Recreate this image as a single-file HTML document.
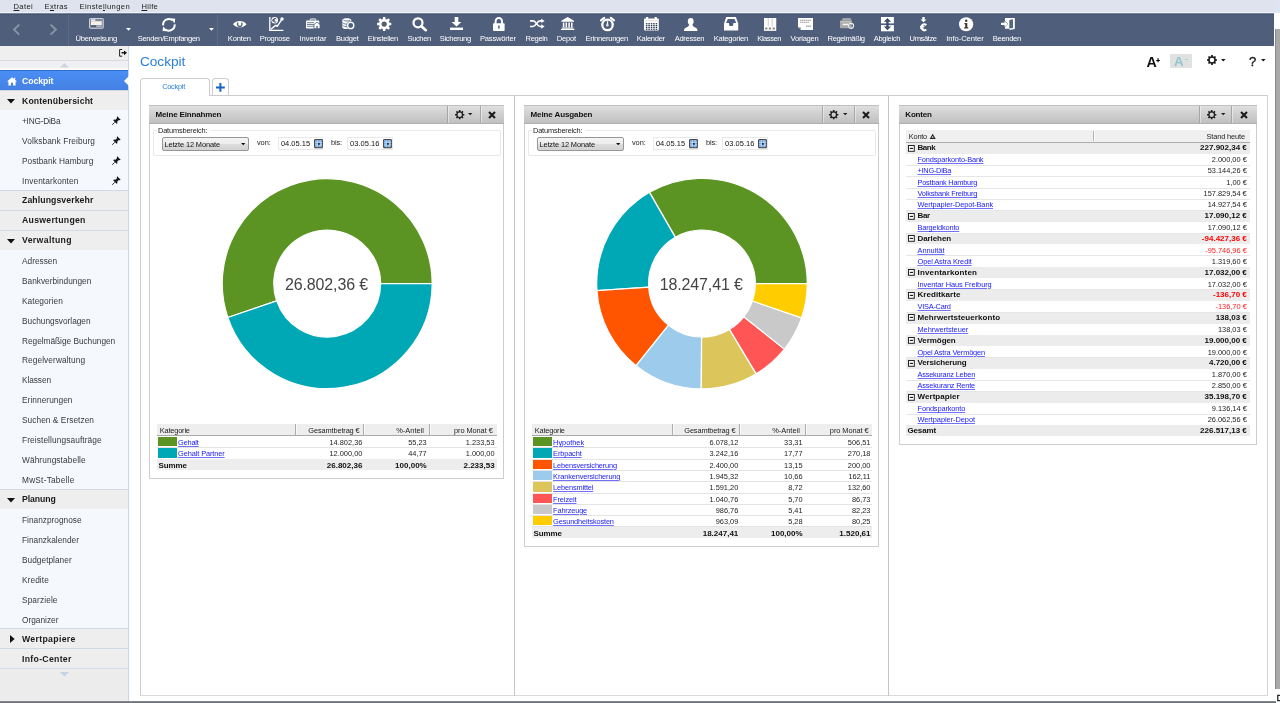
<!DOCTYPE html>
<html><head><meta charset="utf-8"><title>Cockpit</title><style>
*{box-sizing:border-box;margin:0;padding:0}
html,body{width:1280px;height:703px;overflow:hidden;background:#fff}
body{position:relative;font-family:"Liberation Sans",sans-serif;font-size:7.4px;color:#1a1a1a;line-height:1}
.a{position:absolute;white-space:nowrap;line-height:1}
.b{position:absolute}
svg{position:absolute;overflow:visible}
#root{position:absolute;left:0;top:0;width:1280px;height:703px;overflow:hidden;will-change:transform}
.lnk{color:#1818f6;text-decoration:underline;text-decoration-thickness:0.6px;text-underline-offset:0.5px;text-decoration-color:rgba(24,24,246,.62)}
.w{color:#fff}
</style></head><body>
<div id="root">
<div class="b" style="left:0.00px;top:0.00px;width:1274.20px;height:13.00px;background:#dfe3ed;border-bottom:1.2px solid #edf0fa;"></div>
<div class="a" style="left:13.50px;top:3.07px;font-size:7.6px;letter-spacing:0.352px;color:#1c1c1c;"><u>D</u>atei</div>
<div class="a" style="left:44.60px;top:3.07px;font-size:7.6px;letter-spacing:0.310px;color:#1c1c1c;">E<u>x</u>tras</div>
<div class="a" style="left:79.60px;top:3.07px;font-size:7.6px;letter-spacing:0.367px;color:#1c1c1c;">Einste<u>l</u>lungen</div>
<div class="a" style="left:141.50px;top:3.07px;font-size:7.6px;letter-spacing:0.259px;color:#1c1c1c;"><u>H</u>ilfe</div>
<div class="b" style="left:0.00px;top:13.00px;width:1274.20px;height:32.50px;background:linear-gradient(#7b879d 0,#7b879d 1px,#45546f 1px,#45546f 1.8px,#4f5f7b 2.2px);"></div>
<div class="b" style="left:68.00px;top:13.00px;width:1.00px;height:32.50px;background:#5c6c88;"></div>
<div class="b" style="left:217.00px;top:13.00px;width:1.00px;height:32.50px;background:#5c6c88;"></div>
<div class="a" style="left:75.47px;top:34.77px;font-size:7.6px;letter-spacing:-0.251px;color:#fff;">Überweisung</div>
<div class="a" style="left:137.74px;top:34.77px;font-size:7.6px;letter-spacing:-0.324px;color:#fff;">Senden/Empfangen</div>
<div class="a" style="left:227.71px;top:34.77px;font-size:7.6px;letter-spacing:-0.140px;color:#fff;">Konten</div>
<div class="a" style="left:259.85px;top:34.77px;font-size:7.6px;letter-spacing:-0.348px;color:#fff;">Prognose</div>
<div class="a" style="left:299.47px;top:34.77px;font-size:7.6px;letter-spacing:-0.058px;color:#fff;">Inventar</div>
<div class="a" style="left:335.91px;top:34.77px;font-size:7.6px;letter-spacing:-0.223px;color:#fff;">Budget</div>
<div class="a" style="left:367.67px;top:34.77px;font-size:7.6px;letter-spacing:-0.255px;color:#fff;">Einstellen</div>
<div class="a" style="left:407.56px;top:34.77px;font-size:7.6px;letter-spacing:-0.421px;color:#fff;">Suchen</div>
<div class="a" style="left:439.82px;top:34.77px;font-size:7.6px;letter-spacing:-0.358px;color:#fff;">Sicherung</div>
<div class="a" style="left:480.01px;top:34.77px;font-size:7.6px;letter-spacing:-0.226px;color:#fff;">Passwörter</div>
<div class="a" style="left:525.53px;top:34.77px;font-size:7.6px;letter-spacing:-0.347px;color:#fff;">Regeln</div>
<div class="a" style="left:556.77px;top:34.77px;font-size:7.6px;letter-spacing:-0.256px;color:#fff;">Depot</div>
<div class="a" style="left:585.52px;top:34.77px;font-size:7.6px;letter-spacing:-0.261px;color:#fff;">Erinnerungen</div>
<div class="a" style="left:636.85px;top:34.77px;font-size:7.6px;letter-spacing:-0.303px;color:#fff;">Kalender</div>
<div class="a" style="left:674.64px;top:34.77px;font-size:7.6px;letter-spacing:-0.313px;color:#fff;">Adressen</div>
<div class="a" style="left:713.68px;top:34.77px;font-size:7.6px;letter-spacing:-0.236px;color:#fff;">Kategorien</div>
<div class="a" style="left:757.29px;top:34.77px;font-size:7.6px;letter-spacing:-0.470px;color:#fff;">Klassen</div>
<div class="a" style="left:790.57px;top:34.77px;font-size:7.6px;letter-spacing:-0.250px;color:#fff;">Vorlagen</div>
<div class="a" style="left:827.55px;top:34.77px;font-size:7.6px;letter-spacing:-0.397px;color:#fff;">Regelmäßig</div>
<div class="a" style="left:873.79px;top:34.77px;font-size:7.6px;letter-spacing:-0.363px;color:#fff;">Abgleich</div>
<div class="a" style="left:909.59px;top:34.77px;font-size:7.6px;letter-spacing:-0.426px;color:#fff;">Umsätze</div>
<div class="a" style="left:946.23px;top:34.77px;font-size:7.6px;letter-spacing:-0.047px;color:#fff;">Info-Center</div>
<div class="a" style="left:992.83px;top:34.77px;font-size:7.6px;letter-spacing:-0.347px;color:#fff;">Beenden</div>
<svg style="left:13.00px;top:23.80px" width="6.80" height="11.20" viewBox="0 0 6.8 11.2" preserveAspectRatio="none"><path d="M6.2 0.6L1 5.6L6.2 10.6" fill="none" stroke="#8b95a8" stroke-width="1.9"/></svg>
<svg style="left:49.80px;top:23.80px" width="6.90" height="11.20" viewBox="0 0 6.8 11.2" preserveAspectRatio="none"><path d="M0.6 0.6L5.8 5.6L0.6 10.6" fill="none" stroke="#8b95a8" stroke-width="1.9"/></svg>
<svg style="left:89.20px;top:18.20px" width="14.80" height="10.80" viewBox="0 0 14.8 10.8" preserveAspectRatio="none"><rect x="0.5" y="0.5" width="13.8" height="9.8" rx="0.6" fill="#7f8a9d" stroke="#c9ced7" stroke-width="1"/><rect x="2" y="1.2" width="4.4" height="2" fill="#dfe2e7"/><rect x="2" y="3.2" width="10.8" height="3.8" fill="#f3f1ea"/><rect x="2" y="7.6" width="5" height="1.2" fill="#3e4a60"/><rect x="7.4" y="7.6" width="5.4" height="1.2" fill="#b9bfca"/></svg>
<svg style="left:125.50px;top:28.10px" width="5.00" height="2.80" viewBox="0 0 5 2.8" preserveAspectRatio="none"><path d="M0 0H5L2.5 2.8Z" fill="#fff"/></svg>
<svg style="left:208.60px;top:28.10px" width="5.00" height="2.80" viewBox="0 0 5 2.8" preserveAspectRatio="none"><path d="M0 0H5L2.5 2.8Z" fill="#fff"/></svg>
<svg style="left:162.30px;top:17.70px" width="13.80" height="13.60" viewBox="0 0 13.8 13.6" preserveAspectRatio="none"><path d="M1.12 7.3A5.8 5.8 0 0 1 10.63 2.36" fill="none" stroke="#fff" stroke-width="2"/><path d="M8.7 0.3L13.3 0.7L12.5 5.4Z" fill="#fff"/><path d="M12.68 6.3A5.8 5.8 0 0 1 3.17 11.24" fill="none" stroke="#fff" stroke-width="2"/><path d="M5.1 13.3L0.5 12.9L1.3 8.2Z" fill="#fff"/></svg>
<svg style="left:233.00px;top:19.75px" width="13.50" height="8.25" viewBox="0 0 13.5 8.2" preserveAspectRatio="none"><path d="M0 4.1C3 0 10.5 0 13.5 4.1C10.5 8.2 3 8.2 0 4.1Z" fill="#fff"/><path d="M4.6 2.6V4.2A2.15 2.15 0 0 0 8.9 4.2V2.6" fill="none" stroke="#4e5f7c" stroke-width="1.3"/></svg>
<svg style="left:268.75px;top:16.90px" width="14.75" height="14.10" viewBox="0 0 14.75 14.1" preserveAspectRatio="none"><path d="M0.8 0V13.4H14.4" fill="none" stroke="#fff" stroke-width="1.35"/><path d="M1.8 12.2L6.4 8.6L8.6 8.8L13 2.2" fill="none" stroke="#fff" stroke-width="1.4"/><circle cx="13" cy="2.1" r="1.75" fill="#fff"/><circle cx="8.3" cy="8.8" r="1.1" fill="#fff"/><circle cx="5.7" cy="3.3" r="3.3" fill="#fff"/><path d="M7.3 1.9A1.9 1.9 0 1 0 7.3 4.7M3.4 2.9H6.2M3.4 3.8H6" fill="none" stroke="#3f4e69" stroke-width="0.95"/></svg>
<svg style="left:306.00px;top:19.40px" width="14.00" height="9.60" viewBox="0 0 14 9.6" preserveAspectRatio="none"><path d="M4.2 1.6V0.6A0.6 0.6 0 0 1 4.8 0H9.2A0.6 0.6 0 0 1 9.8 0.6V1.6" fill="none" stroke="#fff" stroke-width="1"/><rect x="0" y="1.6" width="13.2" height="7.8" rx="0.7" fill="#fff"/><path d="M1 3.7H8M1 5.5H8M1 7.3H8" stroke="#4e5f7c" stroke-width="0.8"/><path d="M8 9.6V5.6L11 3L14 5.6V9.6Z" fill="#fff" stroke="#4e5f7c" stroke-width="0.8"/><rect x="10.3" y="7" width="1.4" height="2.6" fill="#4e5f7c"/></svg>
<svg style="left:341.90px;top:18.00px" width="12.50" height="11.40" viewBox="0 0 12.5 11.4" preserveAspectRatio="none"><path d="M0.3 2.1C0.3 -0.4 9.3 -0.4 9.3 2.1V9.2C9.3 11.7 0.3 11.7 0.3 9.2Z" fill="#fff"/><path d="M1.4 2.1C2.6 3.4 7 3.4 8.2 2.1" fill="none" stroke="#4e5f7c" stroke-width="0.8"/><path d="M0.3 4.6C1.8 6.3 5 6.3 6 5.9M0.3 7C1.6 8.6 4 8.7 5 8.5" fill="none" stroke="#4e5f7c" stroke-width="0.8"/><circle cx="8.7" cy="7.5" r="3.2" fill="#4e5f7c" stroke="#fff" stroke-width="1.5"/><circle cx="8.7" cy="7.5" r="4.2" fill="none" stroke="#4e5f7c" stroke-width="0.5"/></svg>
<svg style="left:376.90px;top:16.90px" width="14.35" height="14.10" viewBox="0 0 14.2 14.2" preserveAspectRatio="none"><path d="M14.09 5.88L14.09 8.32L12.25 8.34L11.62 9.87L12.91 11.18L11.18 12.91L9.87 11.62L8.34 12.25L8.32 14.09L5.88 14.09L5.86 12.25L4.33 11.62L3.02 12.91L1.29 11.18L2.58 9.87L1.95 8.34L0.11 8.32L0.11 5.88L1.95 5.86L2.58 4.33L1.29 3.02L3.02 1.29L4.33 2.58L5.86 1.95L5.88 0.11L8.32 0.11L8.34 1.95L9.87 2.58L11.18 1.29L12.91 3.02L11.62 4.33L12.25 5.86ZM9.70 7.10A2.6 2.6 0 1 0 4.50 7.10A2.6 2.6 0 1 0 9.70 7.10Z" fill="#fff" fill-rule="evenodd"/></svg>
<svg style="left:412.25px;top:17.00px" width="15.00" height="14.00" viewBox="0 0 15 14" preserveAspectRatio="none"><circle cx="6" cy="5.8" r="4.5" fill="none" stroke="#fff" stroke-width="2.2"/><path d="M9.4 9.2L13.8 13.2" stroke="#fff" stroke-width="2.6" stroke-linecap="round"/></svg>
<svg style="left:450.00px;top:17.00px" width="13.00" height="13.00" viewBox="0 0 13 13" preserveAspectRatio="none"><path d="M4.7 0H8.3V5H11.4L6.5 9.6L1.6 5H4.7Z" fill="#fff"/><rect x="0" y="10.6" width="13" height="2.4" fill="#fff"/></svg>
<svg style="left:492.75px;top:17.00px" width="11.65" height="14.00" viewBox="0 0 11.6 14" preserveAspectRatio="none"><path d="M2.6 7V4.2A3.2 3.2 0 0 1 9 4.2V7" fill="none" stroke="#fff" stroke-width="1.9"/><rect x="0" y="6.2" width="11.6" height="7.8" rx="0.8" fill="#fff"/><rect x="5.1" y="8.6" width="1.5" height="3" fill="#4e5f7c"/></svg>
<svg style="left:529.75px;top:19.40px" width="14.65" height="9.35" viewBox="0 0 14.6 9.4" preserveAspectRatio="none"><g fill="none" stroke="#fff" stroke-width="1.6"><path d="M0 1.9H3C6.4 1.9 6.6 7.5 10 7.5H12"/><path d="M0 7.5H3C6.4 7.5 6.6 1.9 10 1.9H12"/></g><path d="M11.2 -0.3L14.6 1.9L11.2 4.1ZM11.2 5.3L14.6 7.5L11.2 9.7Z" fill="#fff"/></svg>
<svg style="left:560.60px;top:17.00px" width="13.40" height="13.00" viewBox="0 0 13.4 13" preserveAspectRatio="none"><path d="M6.7 0L13 3.8V4.8H0.4V3.8Z" fill="#fff"/><path d="M2.6 5.4V10.4M5.3 5.4V10.4M8.1 5.4V10.4M10.8 5.4V10.4" stroke="#fff" stroke-width="1.5"/><rect x="1" y="10.6" width="11.4" height="1" fill="#fff"/><rect x="0" y="11.8" width="13.4" height="1.2" fill="#fff"/></svg>
<svg style="left:599.75px;top:17.00px" width="15.00" height="14.00" viewBox="0 0 15 14" preserveAspectRatio="none"><circle cx="7.5" cy="7.9" r="5.2" fill="none" stroke="#fff" stroke-width="2.3"/><path d="M7.5 4.2V7.9" stroke="#fff" stroke-width="1.3"/><circle cx="7.3" cy="8.2" r="1.3" fill="#dfe6f2"/><path d="M1 3.4L4.2 0.9M14 3.4L10.8 0.9" stroke="#fff" stroke-width="2.2" stroke-linecap="round"/></svg>
<svg style="left:644.20px;top:17.30px" width="14.80" height="13.60" viewBox="0 0 14.8 13.6" preserveAspectRatio="none"><rect x="0" y="1.6" width="14.8" height="12" rx="0.8" fill="#fff"/><rect x="2" y="0" width="2.2" height="3" fill="#fff"/><rect x="10.6" y="0" width="2.2" height="3" fill="#fff"/><rect x="0.8" y="3.2" width="13.2" height="1" fill="#e9d9cf"/><rect x="1.90" y="6.10" width="1.5" height="1.25" fill="#2e3a50"/><rect x="4.35" y="6.10" width="1.5" height="1.25" fill="#2e3a50"/><rect x="6.80" y="6.10" width="1.5" height="1.25" fill="#2e3a50"/><rect x="9.25" y="6.10" width="1.5" height="1.25" fill="#2e3a50"/><rect x="11.70" y="6.10" width="1.5" height="1.25" fill="#2e3a50"/><rect x="1.90" y="7.95" width="1.5" height="1.25" fill="#2e3a50"/><rect x="4.35" y="7.95" width="1.5" height="1.25" fill="#2e3a50"/><rect x="6.80" y="7.95" width="1.5" height="1.25" fill="#2e3a50"/><rect x="9.25" y="7.95" width="1.5" height="1.25" fill="#2e3a50"/><rect x="11.70" y="7.95" width="1.5" height="1.25" fill="#2e3a50"/><rect x="1.90" y="9.80" width="1.5" height="1.25" fill="#2e3a50"/><rect x="4.35" y="9.80" width="1.5" height="1.25" fill="#2e3a50"/><rect x="6.80" y="9.80" width="1.5" height="1.25" fill="#2e3a50"/><rect x="9.25" y="9.80" width="1.5" height="1.25" fill="#2e3a50"/><rect x="11.70" y="9.80" width="1.5" height="1.25" fill="#2e3a50"/><rect x="1.90" y="11.65" width="1.5" height="1.25" fill="#2e3a50"/><rect x="4.35" y="11.65" width="1.5" height="1.25" fill="#2e3a50"/><rect x="6.80" y="11.65" width="1.5" height="1.25" fill="#2e3a50"/><rect x="9.25" y="11.65" width="1.5" height="1.25" fill="#2e3a50"/><rect x="11.70" y="11.65" width="1.5" height="1.25" fill="#2e3a50"/></svg>
<svg style="left:683.75px;top:18.00px" width="13.50" height="13.00" viewBox="0 0 13.5 13" preserveAspectRatio="none"><ellipse cx="6.75" cy="3.4" rx="2.9" ry="3.4" fill="#fff"/><path d="M5.2 5.6C5.2 8 4.4 8.6 2.4 9.4C0.6 10.1 0 10.8 0 13H13.5C13.5 10.8 12.9 10.1 11.1 9.4C9.1 8.6 8.3 8 8.3 5.6Z" fill="#fff"/></svg>
<svg style="left:723.90px;top:16.80px" width="14.20" height="13.40" viewBox="0 0 14.2 13.4" preserveAspectRatio="none"><path d="M2.2 0H11.9L14.2 6.5V13.4H0V6.5Z" fill="#fff"/><path d="M3.8 2.1H10.6L12.2 6.1H9.5L8.9 8.9H5.4L4.9 6.1H2.1Z" fill="#4e5f7c"/></svg>
<svg style="left:764.00px;top:17.75px" width="12.25" height="12.85" viewBox="0 0 12.2 12.8" preserveAspectRatio="none"><rect x="0" y="0" width="12.2" height="12.8" fill="#fff"/><path d="M4.2 0V8.4M8.1 0V8.4" stroke="#b8beca" stroke-width="0.8"/><rect x="0.8" y="8.6" width="10.6" height="3.2" fill="#fff"/><path d="M1.2 9.4H3.4V11.4H1.2ZM4.8 9.4H7V11.4H4.8ZM8.6 9.4H10.8V11.4H8.6Z" fill="#8e8a84"/></svg>
<svg style="left:797.50px;top:18.00px" width="15.00" height="12.00" viewBox="0 0 15 12" preserveAspectRatio="none"><path d="M0 0H15V12H3L0 9Z" fill="#fff"/><path d="M0 9H3V12Z" fill="#4e5f7c"/><path d="M0.4 9.2H2.8V11.6" fill="none" stroke="#fff" stroke-width="0.7"/><path d="M2 2.2H13M2 4.2H11" stroke="#9a9a96" stroke-width="1.1" stroke-dasharray="1.6 0.4"/><path d="M8 8.2H13" stroke="#9a9a96" stroke-width="1.3" stroke-dasharray="1.4 0.4"/></svg>
<svg style="left:839.80px;top:18.00px" width="13.80" height="10.80" viewBox="0 0 13.8 10.8" preserveAspectRatio="none"><path d="M1.6 2.6L3 0.3H10.6L11.6 2.6Z" fill="#bdbdbb"/><path d="M2.4 1.2H11M2 2H11.3" stroke="#8d939d" stroke-width="0.45"/><rect x="0" y="2.6" width="11.8" height="7.6" rx="0.5" fill="#a9a9a7"/><rect x="0.3" y="3.2" width="11.2" height="1.2" fill="#c6c6c4"/><rect x="2.6" y="5.7" width="5.6" height="1.5" fill="#f4f4f4"/><circle cx="11.1" cy="7.8" r="2.5" fill="#4e5f7c" stroke="#ececec" stroke-width="1.2"/><path d="M12 7A1.2 1.2 0 1 0 12 8.7" fill="none" stroke="#ececec" stroke-width="0.8"/></svg>
<svg style="left:880.70px;top:16.60px" width="12.90" height="14.30" viewBox="0 0 12.9 14.3" preserveAspectRatio="none"><rect x="0" y="0" width="12.9" height="6.4" fill="#fff"/><rect x="0" y="8.1" width="12.9" height="6.2" fill="#fff"/><path d="M6.45 1.1L10.1 4.8H7.65V9.6H10.1L6.45 13.3L2.8 9.6H5.25V4.8H2.8Z" fill="#3d4c67"/></svg>
<svg style="left:920.00px;top:16.60px" width="7.00" height="14.20" viewBox="0 0 7 14.2" preserveAspectRatio="none"><path d="M2.3 0H4.7V2.4H6.4L3.5 5.3L0.6 2.4H2.3Z" fill="#fff"/><path d="M6.3 8.1A2.9 2.9 0 1 0 6.3 12.5" fill="none" stroke="#fff" stroke-width="2.1"/><path d="M0 9.5H4.4M0 11.1H4.2" stroke="#fff" stroke-width="1"/></svg>
<svg style="left:958.75px;top:16.50px" width="14.25" height="14.50" viewBox="0 0 14.25 14.5" preserveAspectRatio="none"><circle cx="7.1" cy="7.25" r="7.1" fill="#fff"/><circle cx="7.2" cy="3.7" r="1.25" fill="#3a3a3a"/><path d="M5.4 6H8.3V10.2H9.2V11.4H5.2V10.2H6.2V7.2H5.4Z" fill="#3a3a3a"/></svg>
<svg style="left:1001.00px;top:17.70px" width="13.80" height="12.00" viewBox="0 0 13.8 12" preserveAspectRatio="none"><path d="M4 0H13.8V10.9L8.5 12V10.8H4Z" fill="#fff"/><path d="M8.3 2L12 1.3V9.9L8.3 10.6Z" fill="#55647f"/><path d="M0 4.7H3.5V3L6.8 5.9L3.5 8.8V7.1H0Z" fill="#fff" stroke="#4e5f7c" stroke-width="0.9" paint-order="stroke"/></svg>
<div class="b" style="left:1274.20px;top:0.00px;width:5.80px;height:12.50px;background:#dfe4f3;"></div>
<div class="b" style="left:1275.00px;top:28.80px;width:5.00px;height:660.00px;background:#a9a9a9;border-left:1px solid #8c8c8c;"></div>
<div class="b" style="left:0.00px;top:700.70px;width:1275.50px;height:2.30px;background:linear-gradient(#8f939a,#63666c);"></div>
<div class="a" style="left:1276.50px;top:692.94px;font-size:9.4px;letter-spacing:0.000px;color:#111;-webkit-text-stroke:0.3px #111;">D</div>
<div class="b" style="left:0.00px;top:45.50px;width:128.40px;height:655.20px;background:#ededed;"></div>
<div class="b" style="left:128.20px;top:45.50px;width:1.00px;height:655.20px;background:#c9d6e8;"></div>
<div class="b" style="left:0.00px;top:45.50px;width:128.20px;height:15.10px;background:#efefef;border-bottom:1px solid #dadada;"></div>
<div class="b" style="left:0.00px;top:60.60px;width:128.20px;height:9.80px;background:linear-gradient(#eef0f3 0,#eef0f3 72%,#fcfaf7 78%);"></div>
<svg style="left:118.6px;top:48.6px" width="9" height="8" viewBox="0 0 9 8"><path d="M3.2 0.5H0.6V7.2H3.2" fill="none" stroke="#222" stroke-width="1"/><path d="M2.6 3.1H5V1.4L8 3.85L5 6.3V4.6H2.6Z" fill="#111"/></svg>
<svg style="left:59.8px;top:63.4px" width="9" height="5" viewBox="0 0 9 5"><path d="M0 4.6L4.4 0L8.8 4.6Z" fill="#cdd5e2"/></svg>
<div class="b" style="left:0.00px;top:70.10px;width:128.20px;height:20.43px;background:linear-gradient(#4a8ff6,#4480e2);border-top:1px solid #2f6dcc;border-bottom:1px solid #336ad2;"></div>
<svg style="left:123.6px;top:75.50px" width="5" height="10" viewBox="0 0 5 10"><path d="M5 0L0 5L5 10Z" fill="#fff"/></svg>
<svg style="left:6.6px;top:76.80px" width="10" height="9" viewBox="0 0 10 9"><path d="M5 0.2L0 4.6H1.4V8.6H4V5.8H6V8.6H8.6V4.6H10L8.2 3V0.8H7V2Z" fill="#fff"/></svg>
<div class="a" style="left:22.00px;top:76.64px;font-size:8.7px;letter-spacing:-0.072px;font-weight:bold;color:#fff;">Cockpit</div>
<div class="b" style="left:0.00px;top:90.23px;width:128.20px;height:20.04px;background:#eeeeee;border-top:0.9px solid #d3dae6;"></div>
<div class="a" style="left:22.00px;top:96.57px;font-size:8.7px;letter-spacing:0.139px;font-weight:bold;color:#1a1a1a;">Kontenübersicht</div>
<svg style="left:7.4px;top:99.23px" width="8" height="5" viewBox="0 0 8 5"><path d="M0 0H8L4 4.6Z" fill="#111"/></svg>
<div class="b" style="left:0.00px;top:110.17px;width:128.20px;height:20.04px;background:#f5f9fe;"></div>
<div class="a" style="left:22.00px;top:117.24px;font-size:8.3px;letter-spacing:-0.229px;color:#383838;">+ING-DiBa</div>
<svg style="left:111.6px;top:116.07px" width="9" height="9" viewBox="0 0 9 9"><path d="M5.2 0.3L8.7 3.8L7.6 4.3L6.9 3.9L5.3 5.5L5.4 7.2L4.6 7.7L1.3 4.4L1.8 3.6L3.5 3.7L5.1 2.1L4.7 1.4Z" fill="#1a1a1a"/><path d="M2.7 6.3L0.2 8.8" stroke="#1a1a1a" stroke-width="0.9"/></svg>
<div class="b" style="left:0.00px;top:130.10px;width:128.20px;height:20.04px;background:#f5f9fe;"></div>
<div class="a" style="left:22.00px;top:137.18px;font-size:8.3px;letter-spacing:0.114px;color:#383838;">Volksbank Freiburg</div>
<svg style="left:111.6px;top:136.00px" width="9" height="9" viewBox="0 0 9 9"><path d="M5.2 0.3L8.7 3.8L7.6 4.3L6.9 3.9L5.3 5.5L5.4 7.2L4.6 7.7L1.3 4.4L1.8 3.6L3.5 3.7L5.1 2.1L4.7 1.4Z" fill="#1a1a1a"/><path d="M2.7 6.3L0.2 8.8" stroke="#1a1a1a" stroke-width="0.9"/></svg>
<div class="b" style="left:0.00px;top:150.04px;width:128.20px;height:20.04px;background:#f5f9fe;"></div>
<div class="a" style="left:22.00px;top:157.11px;font-size:8.3px;letter-spacing:0.016px;color:#383838;">Postbank Hamburg</div>
<svg style="left:111.6px;top:155.94px" width="9" height="9" viewBox="0 0 9 9"><path d="M5.2 0.3L8.7 3.8L7.6 4.3L6.9 3.9L5.3 5.5L5.4 7.2L4.6 7.7L1.3 4.4L1.8 3.6L3.5 3.7L5.1 2.1L4.7 1.4Z" fill="#1a1a1a"/><path d="M2.7 6.3L0.2 8.8" stroke="#1a1a1a" stroke-width="0.9"/></svg>
<div class="b" style="left:0.00px;top:169.97px;width:128.20px;height:20.04px;background:#f5f9fe;"></div>
<div class="a" style="left:22.00px;top:177.05px;font-size:8.3px;letter-spacing:0.114px;color:#383838;">Inventarkonten</div>
<svg style="left:111.6px;top:175.88px" width="9" height="9" viewBox="0 0 9 9"><path d="M5.2 0.3L8.7 3.8L7.6 4.3L6.9 3.9L5.3 5.5L5.4 7.2L4.6 7.7L1.3 4.4L1.8 3.6L3.5 3.7L5.1 2.1L4.7 1.4Z" fill="#1a1a1a"/><path d="M2.7 6.3L0.2 8.8" stroke="#1a1a1a" stroke-width="0.9"/></svg>
<div class="b" style="left:0.00px;top:189.91px;width:128.20px;height:20.04px;background:#eeeeee;border-top:0.9px solid #d3dae6;"></div>
<div class="a" style="left:22.00px;top:196.25px;font-size:8.7px;letter-spacing:0.093px;font-weight:bold;color:#1a1a1a;">Zahlungsverkehr</div>
<div class="b" style="left:0.00px;top:209.84px;width:128.20px;height:20.04px;background:#eeeeee;border-top:0.9px solid #d3dae6;"></div>
<div class="a" style="left:22.00px;top:216.18px;font-size:8.7px;letter-spacing:0.277px;font-weight:bold;color:#1a1a1a;">Auswertungen</div>
<div class="b" style="left:0.00px;top:229.78px;width:128.20px;height:20.04px;background:#eeeeee;border-top:0.9px solid #d3dae6;"></div>
<div class="a" style="left:22.00px;top:236.12px;font-size:8.7px;letter-spacing:0.359px;font-weight:bold;color:#1a1a1a;">Verwaltung</div>
<svg style="left:7.4px;top:238.78px" width="8" height="5" viewBox="0 0 8 5"><path d="M0 0H8L4 4.6Z" fill="#111"/></svg>
<div class="b" style="left:0.00px;top:249.71px;width:128.20px;height:20.04px;background:#f5f9fe;"></div>
<div class="a" style="left:22.00px;top:256.79px;font-size:8.3px;letter-spacing:0.004px;color:#383838;">Adressen</div>
<div class="b" style="left:0.00px;top:269.65px;width:128.20px;height:20.04px;background:#f5f9fe;"></div>
<div class="a" style="left:22.00px;top:276.72px;font-size:8.3px;letter-spacing:0.005px;color:#383838;">Bankverbindungen</div>
<div class="b" style="left:0.00px;top:289.58px;width:128.20px;height:20.04px;background:#f5f9fe;"></div>
<div class="a" style="left:22.00px;top:296.66px;font-size:8.3px;letter-spacing:0.075px;color:#383838;">Kategorien</div>
<div class="b" style="left:0.00px;top:309.52px;width:128.20px;height:20.04px;background:#f5f9fe;"></div>
<div class="a" style="left:22.00px;top:316.59px;font-size:8.3px;letter-spacing:-0.010px;color:#383838;">Buchungsvorlagen</div>
<div class="b" style="left:0.00px;top:329.45px;width:128.20px;height:20.04px;background:#f5f9fe;"></div>
<div class="a" style="left:22.00px;top:336.53px;font-size:8.3px;letter-spacing:-0.022px;color:#383838;">Regelmäßige Buchungen</div>
<div class="b" style="left:0.00px;top:349.39px;width:128.20px;height:20.04px;background:#f5f9fe;"></div>
<div class="a" style="left:22.00px;top:356.46px;font-size:8.3px;letter-spacing:0.085px;color:#383838;">Regelverwaltung</div>
<div class="b" style="left:0.00px;top:369.32px;width:128.20px;height:20.04px;background:#f5f9fe;"></div>
<div class="a" style="left:22.00px;top:376.40px;font-size:8.3px;letter-spacing:-0.075px;color:#383838;">Klassen</div>
<div class="b" style="left:0.00px;top:389.26px;width:128.20px;height:20.04px;background:#f5f9fe;"></div>
<div class="a" style="left:22.00px;top:396.33px;font-size:8.3px;letter-spacing:0.055px;color:#383838;">Erinnerungen</div>
<div class="b" style="left:0.00px;top:409.19px;width:128.20px;height:20.04px;background:#f5f9fe;"></div>
<div class="a" style="left:22.00px;top:416.27px;font-size:8.3px;letter-spacing:0.056px;color:#383838;">Suchen & Ersetzen</div>
<div class="b" style="left:0.00px;top:429.13px;width:128.20px;height:20.04px;background:#f5f9fe;"></div>
<div class="a" style="left:22.00px;top:436.20px;font-size:8.3px;letter-spacing:0.109px;color:#383838;">Freistellungsaufträge</div>
<div class="b" style="left:0.00px;top:449.06px;width:128.20px;height:20.04px;background:#f5f9fe;"></div>
<div class="a" style="left:22.00px;top:456.14px;font-size:8.3px;letter-spacing:0.098px;color:#383838;">Währungstabelle</div>
<div class="b" style="left:0.00px;top:469.00px;width:128.20px;height:20.04px;background:#f5f9fe;"></div>
<div class="a" style="left:22.00px;top:476.07px;font-size:8.3px;letter-spacing:0.224px;color:#383838;">MwSt-Tabelle</div>
<div class="b" style="left:0.00px;top:488.94px;width:128.20px;height:20.04px;background:#eeeeee;border-top:0.9px solid #d3dae6;"></div>
<div class="a" style="left:22.00px;top:495.27px;font-size:8.7px;letter-spacing:-0.081px;font-weight:bold;color:#1a1a1a;">Planung</div>
<svg style="left:7.4px;top:497.94px" width="8" height="5" viewBox="0 0 8 5"><path d="M0 0H8L4 4.6Z" fill="#111"/></svg>
<div class="b" style="left:0.00px;top:508.87px;width:128.20px;height:20.04px;background:#f5f9fe;"></div>
<div class="a" style="left:22.00px;top:515.94px;font-size:8.3px;letter-spacing:0.006px;color:#383838;">Finanzprognose</div>
<div class="b" style="left:0.00px;top:528.80px;width:128.20px;height:20.04px;background:#f5f9fe;"></div>
<div class="a" style="left:22.00px;top:535.88px;font-size:8.3px;letter-spacing:0.018px;color:#383838;">Finanzkalender</div>
<div class="b" style="left:0.00px;top:548.74px;width:128.20px;height:20.04px;background:#f5f9fe;"></div>
<div class="a" style="left:22.00px;top:555.81px;font-size:8.3px;letter-spacing:0.027px;color:#383838;">Budgetplaner</div>
<div class="b" style="left:0.00px;top:568.67px;width:128.20px;height:20.04px;background:#f5f9fe;"></div>
<div class="a" style="left:22.00px;top:575.75px;font-size:8.3px;letter-spacing:0.086px;color:#383838;">Kredite</div>
<div class="b" style="left:0.00px;top:588.61px;width:128.20px;height:20.04px;background:#f5f9fe;"></div>
<div class="a" style="left:22.00px;top:595.68px;font-size:8.3px;letter-spacing:0.111px;color:#383838;">Sparziele</div>
<div class="b" style="left:0.00px;top:608.54px;width:128.20px;height:20.04px;background:#f5f9fe;"></div>
<div class="a" style="left:22.00px;top:615.62px;font-size:8.3px;letter-spacing:0.006px;color:#383838;">Organizer</div>
<div class="b" style="left:0.00px;top:628.48px;width:128.20px;height:20.04px;background:#eeeeee;border-top:0.9px solid #d3dae6;"></div>
<div class="a" style="left:22.00px;top:634.82px;font-size:8.7px;letter-spacing:0.330px;font-weight:bold;color:#1a1a1a;">Wertpapiere</div>
<svg style="left:9.6px;top:634.68px" width="5" height="8" viewBox="0 0 5 8"><path d="M0 0V8L4.6 4Z" fill="#111"/></svg>
<div class="b" style="left:0.00px;top:648.41px;width:128.20px;height:20.04px;background:#eeeeee;border-top:0.9px solid #d3dae6;"></div>
<div class="a" style="left:22.00px;top:654.75px;font-size:8.7px;letter-spacing:0.305px;font-weight:bold;color:#1a1a1a;">Info-Center</div>
<div class="b" style="left:0.00px;top:668.35px;width:128.20px;height:32.25px;background:#ececec;border-top:0.8px solid #d3dbe6;"></div>
<svg style="left:59.8px;top:671.95px" width="9" height="5" viewBox="0 0 9 5"><path d="M0 0H8.8L4.4 4.4Z" fill="#c3d2e8"/></svg>
<div class="a" style="left:140.00px;top:54.50px;font-size:13.7px;letter-spacing:-0.069px;color:#2a80d6;">Cockpit</div>
<div class="a" style="left:1146.60px;top:54.68px;font-size:14.2px;letter-spacing:0.000px;font-weight:bold;color:#111;">A</div>
<div class="a" style="left:1156.00px;top:56.77px;font-size:7px;letter-spacing:0.000px;font-weight:bold;color:#111;-webkit-text-stroke:0.3px #111;">+</div>
<div class="b" style="left:1169.75px;top:53.75px;width:22.20px;height:14.30px;background:#e1e1e1;border-radius:1px;"></div>
<div class="a" style="left:1173.90px;top:55.16px;font-size:13.4px;letter-spacing:0.000px;font-weight:bold;color:#8fc6d0;">A</div>
<div class="b" style="left:1184.60px;top:59.40px;width:3.40px;height:1.10px;background:#a6d0d8;"></div>
<svg style="left:1207.20px;top:55.40px" width="10" height="10" viewBox="0 0 10 10"><path d="M9.93 4.14L9.93 5.86L8.79 5.91L8.33 7.04L9.09 7.88L7.88 9.09L7.04 8.33L5.91 8.79L5.86 9.93L4.14 9.93L4.09 8.79L2.96 8.33L2.12 9.09L0.91 7.88L1.67 7.04L1.21 5.91L0.07 5.86L0.07 4.14L1.21 4.09L1.67 2.96L0.91 2.12L2.12 0.91L2.96 1.67L4.09 1.21L4.14 0.07L5.86 0.07L5.91 1.21L7.04 1.67L7.88 0.91L9.09 2.12L8.33 2.96L8.79 4.09ZM7.30 5.00A2.3 2.3 0 1 0 2.70 5.00A2.3 2.3 0 1 0 7.30 5.00Z" fill="#1a1a1a" fill-rule="evenodd"/></svg>
<svg style="left:1221.00px;top:59.20px" width="5" height="3" viewBox="0 0 5 3"><path d="M0 0H4.6L2.3 2.4Z" fill="#1a1a1a"/></svg>
<div class="a" style="left:1249.00px;top:54.90px;font-size:13px;letter-spacing:0.000px;color:#1a1a1a;-webkit-text-stroke:0.35px #1a1a1a;">?</div>
<svg style="left:1261.20px;top:59.20px" width="5" height="3" viewBox="0 0 5 3"><path d="M0 0H4.6L2.3 2.4Z" fill="#1a1a1a"/></svg>
<div class="b" style="left:139.50px;top:95.00px;width:1128.30px;height:601.20px;border:1px solid #cdcdcd;border-right:1.4px solid #d4d4d4;border-bottom-color:#ddd9d9;background:#fff;"></div>
<div class="b" style="left:513.80px;top:96.00px;width:1.40px;height:599.50px;background:#c6c6c6;"></div>
<div class="b" style="left:887.80px;top:96.00px;width:1.40px;height:599.50px;background:#c6c6c6;"></div>
<div class="b" style="left:139.50px;top:77.80px;width:70.00px;height:18.40px;background:#fff;border:1px solid #cdcdcd;border-bottom:none;border-radius:3.5px 3.5px 0 0;"></div>
<div class="a" style="left:162.19px;top:82.99px;font-size:7.4px;letter-spacing:-0.275px;color:#2a7fd6;">Cockpit</div>
<div class="b" style="left:212.00px;top:77.80px;width:17.20px;height:17.60px;background:#fff;border:1px solid #cdcdcd;border-bottom:none;border-radius:3.5px 3.5px 0 0;"></div>
<svg style="left:216.20px;top:83.00px" width="9" height="9" viewBox="0 0 9 9"><path d="M3.4 0H5.4V3.4H8.8V5.4H5.4V8.8H3.4V5.4H0V3.4H3.4Z" fill="#1464c4"/></svg>
<div class="b" style="left:149.40px;top:123.00px;width:354.50px;height:355.80px;background:#fff;border:1px solid #cdcdcd;border-top:none;"></div>
<div class="b" style="left:149.40px;top:105.10px;width:354.50px;height:18.60px;background:linear-gradient(#dfdfdf,#d0d0d0 45%,#c0c0c0);border-top:1px solid #c0c0c0;border-bottom:1px solid #b0b0b0;"></div>
<div class="a" style="left:155.50px;top:111.23px;font-size:8px;letter-spacing:-0.147px;font-weight:bold;color:#111;">Meine Einnahmen</div>
<div class="b" style="left:447.30px;top:106.00px;width:0.90px;height:17.00px;background:#a6a6a6;"></div>
<div class="b" style="left:448.20px;top:106.00px;width:0.80px;height:17.00px;background:rgba(255,255,255,.45);"></div>
<div class="b" style="left:479.60px;top:106.00px;width:0.90px;height:17.00px;background:#a6a6a6;"></div>
<div class="b" style="left:480.50px;top:106.00px;width:0.80px;height:17.00px;background:rgba(255,255,255,.45);"></div>
<svg style="left:454.80px;top:109.80px" width="9.4" height="9.4" viewBox="0 0 9.4 9.4"><path d="M9.33 3.89L9.33 5.51L8.10 5.52L7.68 6.53L8.55 7.40L7.40 8.55L6.53 7.68L5.52 8.10L5.51 9.33L3.89 9.33L3.88 8.10L2.87 7.68L2.00 8.55L0.85 7.40L1.72 6.53L1.30 5.52L0.07 5.51L0.07 3.89L1.30 3.88L1.72 2.87L0.85 2.00L2.00 0.85L2.87 1.72L3.88 1.30L3.89 0.07L5.51 0.07L5.52 1.30L6.53 1.72L7.40 0.85L8.55 2.00L7.68 2.87L8.10 3.88ZM6.90 4.70A2.2 2.2 0 1 0 2.50 4.70A2.2 2.2 0 1 0 6.90 4.70Z" fill="#1a1a1a" fill-rule="evenodd"/></svg>
<svg style="left:468.30px;top:112.90px" width="5" height="3" viewBox="0 0 5 3"><path d="M0 0H4.4L2.2 2.3Z" fill="#1a1a1a"/></svg>
<svg style="left:487.85px;top:110.50px" width="8" height="8" viewBox="0 0 8 8"><path d="M1 1L7 7M7 1L1 7" stroke="#1a1a1a" stroke-width="2.1" stroke-linecap="butt"/></svg>
<div class="b" style="left:524.40px;top:123.00px;width:354.30px;height:424.00px;background:#fff;border:1px solid #cdcdcd;border-top:none;"></div>
<div class="b" style="left:524.40px;top:105.10px;width:354.30px;height:18.60px;background:linear-gradient(#dfdfdf,#d0d0d0 45%,#c0c0c0);border-top:1px solid #c0c0c0;border-bottom:1px solid #b0b0b0;"></div>
<div class="a" style="left:530.50px;top:111.23px;font-size:8px;letter-spacing:-0.098px;font-weight:bold;color:#111;">Meine Ausgaben</div>
<div class="b" style="left:821.70px;top:106.00px;width:0.90px;height:17.00px;background:#a6a6a6;"></div>
<div class="b" style="left:822.60px;top:106.00px;width:0.80px;height:17.00px;background:rgba(255,255,255,.45);"></div>
<div class="b" style="left:853.60px;top:106.00px;width:0.90px;height:17.00px;background:#a6a6a6;"></div>
<div class="b" style="left:854.50px;top:106.00px;width:0.80px;height:17.00px;background:rgba(255,255,255,.45);"></div>
<svg style="left:829.20px;top:109.80px" width="9.4" height="9.4" viewBox="0 0 9.4 9.4"><path d="M9.33 3.89L9.33 5.51L8.10 5.52L7.68 6.53L8.55 7.40L7.40 8.55L6.53 7.68L5.52 8.10L5.51 9.33L3.89 9.33L3.88 8.10L2.87 7.68L2.00 8.55L0.85 7.40L1.72 6.53L1.30 5.52L0.07 5.51L0.07 3.89L1.30 3.88L1.72 2.87L0.85 2.00L2.00 0.85L2.87 1.72L3.88 1.30L3.89 0.07L5.51 0.07L5.52 1.30L6.53 1.72L7.40 0.85L8.55 2.00L7.68 2.87L8.10 3.88ZM6.90 4.70A2.2 2.2 0 1 0 2.50 4.70A2.2 2.2 0 1 0 6.90 4.70Z" fill="#1a1a1a" fill-rule="evenodd"/></svg>
<svg style="left:842.70px;top:112.90px" width="5" height="3" viewBox="0 0 5 3"><path d="M0 0H4.4L2.2 2.3Z" fill="#1a1a1a"/></svg>
<svg style="left:861.85px;top:110.50px" width="8" height="8" viewBox="0 0 8 8"><path d="M1 1L7 7M7 1L1 7" stroke="#1a1a1a" stroke-width="2.1" stroke-linecap="butt"/></svg>
<div class="b" style="left:899.20px;top:123.00px;width:357.40px;height:322.00px;background:#fff;border:1px solid #cdcdcd;border-top:none;"></div>
<div class="b" style="left:899.20px;top:105.10px;width:357.40px;height:18.60px;background:linear-gradient(#dfdfdf,#d0d0d0 45%,#c0c0c0);border-top:1px solid #c0c0c0;border-bottom:1px solid #b0b0b0;"></div>
<div class="a" style="left:905.30px;top:111.23px;font-size:8px;letter-spacing:-0.175px;font-weight:bold;color:#111;">Konten</div>
<div class="b" style="left:1198.80px;top:106.00px;width:0.90px;height:17.00px;background:#a6a6a6;"></div>
<div class="b" style="left:1199.70px;top:106.00px;width:0.80px;height:17.00px;background:rgba(255,255,255,.45);"></div>
<div class="b" style="left:1230.80px;top:106.00px;width:0.90px;height:17.00px;background:#a6a6a6;"></div>
<div class="b" style="left:1231.70px;top:106.00px;width:0.80px;height:17.00px;background:rgba(255,255,255,.45);"></div>
<svg style="left:1207.40px;top:109.80px" width="9.4" height="9.4" viewBox="0 0 9.4 9.4"><path d="M9.33 3.89L9.33 5.51L8.10 5.52L7.68 6.53L8.55 7.40L7.40 8.55L6.53 7.68L5.52 8.10L5.51 9.33L3.89 9.33L3.88 8.10L2.87 7.68L2.00 8.55L0.85 7.40L1.72 6.53L1.30 5.52L0.07 5.51L0.07 3.89L1.30 3.88L1.72 2.87L0.85 2.00L2.00 0.85L2.87 1.72L3.88 1.30L3.89 0.07L5.51 0.07L5.52 1.30L6.53 1.72L7.40 0.85L8.55 2.00L7.68 2.87L8.10 3.88ZM6.90 4.70A2.2 2.2 0 1 0 2.50 4.70A2.2 2.2 0 1 0 6.90 4.70Z" fill="#1a1a1a" fill-rule="evenodd"/></svg>
<svg style="left:1220.90px;top:112.90px" width="5" height="3" viewBox="0 0 5 3"><path d="M0 0H4.4L2.2 2.3Z" fill="#1a1a1a"/></svg>
<svg style="left:1240.10px;top:110.50px" width="8" height="8" viewBox="0 0 8 8"><path d="M1 1L7 7M7 1L1 7" stroke="#1a1a1a" stroke-width="2.1" stroke-linecap="butt"/></svg>
<div class="b" style="left:153.40px;top:130.40px;width:347.40px;height:25.20px;border:0.8px solid #e6e9ee;border-radius:2px;"></div>
<div class="b" style="left:157.00px;top:128.00px;width:53.60px;height:6.00px;background:#fff;"></div>
<div class="a" style="left:158.00px;top:127.34px;font-size:7.4px;letter-spacing:-0.166px;color:#222;">Datumsbereich:</div>
<div class="b" style="left:162.30px;top:137.30px;width:86.90px;height:13.40px;border:0.9px solid #979797;border-radius:2px;background:linear-gradient(#f4f4f4,#ececec 50%,#dddddd 51%,#d2d2d2);"></div>
<div class="a" style="left:164.40px;top:140.54px;font-size:7.4px;letter-spacing:-0.099px;color:#111;">Letzte 12 Monate</div>
<svg style="left:241.30px;top:142.80px" width="5" height="3" viewBox="0 0 5 3"><path d="M0 0H4.4L2.2 2.3Z" fill="#111"/></svg>
<div class="a" style="left:256.90px;top:138.99px;font-size:7.4px;letter-spacing:0.003px;color:#222;">von:</div>
<div class="a" style="left:331.00px;top:138.99px;font-size:7.4px;letter-spacing:-0.154px;color:#222;">bis:</div>
<div class="b" style="left:277.70px;top:136.90px;width:45.80px;height:12.90px;background:#fff;border:0.8px solid #e9e9e9;"></div>
<div class="a" style="left:280.90px;top:140.15px;font-size:7.5px;letter-spacing:0.013px;color:#111;">04.05.15</div>
<div class="b" style="left:313.70px;top:138.70px;width:9.40px;height:9.50px;background:#6ea3dc;border:0.9px solid #4a4a4a;border-radius:1px;box-shadow:0 0.8px 0 #bbb;"></div>
<svg style="left:313.70px;top:138.70px" width="9.4" height="9.5" viewBox="0 0 9.4 9.5"><path d="M3.3 1V8.5M6.1 1V8.5M1 3.3H8.4M1 5.9H8.4" stroke="#cfe2f6" stroke-width="0.7"/><rect x="4.1" y="4" width="1.6" height="1.8" fill="#123"/></svg>
<div class="b" style="left:346.90px;top:136.90px;width:45.80px;height:12.90px;background:#fff;border:0.8px solid #e9e9e9;"></div>
<div class="a" style="left:350.10px;top:140.15px;font-size:7.5px;letter-spacing:0.013px;color:#111;">03.05.16</div>
<div class="b" style="left:382.90px;top:138.70px;width:9.40px;height:9.50px;background:#6ea3dc;border:0.9px solid #4a4a4a;border-radius:1px;box-shadow:0 0.8px 0 #bbb;"></div>
<svg style="left:382.90px;top:138.70px" width="9.4" height="9.5" viewBox="0 0 9.4 9.5"><path d="M3.3 1V8.5M6.1 1V8.5M1 3.3H8.4M1 5.9H8.4" stroke="#cfe2f6" stroke-width="0.7"/><rect x="4.1" y="4" width="1.6" height="1.8" fill="#123"/></svg>
<div class="b" style="left:528.40px;top:130.40px;width:347.40px;height:25.20px;border:0.8px solid #e6e9ee;border-radius:2px;"></div>
<div class="b" style="left:532.00px;top:128.00px;width:53.60px;height:6.00px;background:#fff;"></div>
<div class="a" style="left:533.00px;top:127.34px;font-size:7.4px;letter-spacing:-0.166px;color:#222;">Datumsbereich:</div>
<div class="b" style="left:537.30px;top:137.30px;width:86.90px;height:13.40px;border:0.9px solid #979797;border-radius:2px;background:linear-gradient(#f4f4f4,#ececec 50%,#dddddd 51%,#d2d2d2);"></div>
<div class="a" style="left:539.40px;top:140.54px;font-size:7.4px;letter-spacing:-0.099px;color:#111;">Letzte 12 Monate</div>
<svg style="left:616.30px;top:142.80px" width="5" height="3" viewBox="0 0 5 3"><path d="M0 0H4.4L2.2 2.3Z" fill="#111"/></svg>
<div class="a" style="left:631.90px;top:138.99px;font-size:7.4px;letter-spacing:0.003px;color:#222;">von:</div>
<div class="a" style="left:706.00px;top:138.99px;font-size:7.4px;letter-spacing:-0.154px;color:#222;">bis:</div>
<div class="b" style="left:652.70px;top:136.90px;width:45.80px;height:12.90px;background:#fff;border:0.8px solid #e9e9e9;"></div>
<div class="a" style="left:655.90px;top:140.15px;font-size:7.5px;letter-spacing:0.013px;color:#111;">04.05.15</div>
<div class="b" style="left:688.70px;top:138.70px;width:9.40px;height:9.50px;background:#6ea3dc;border:0.9px solid #4a4a4a;border-radius:1px;box-shadow:0 0.8px 0 #bbb;"></div>
<svg style="left:688.70px;top:138.70px" width="9.4" height="9.5" viewBox="0 0 9.4 9.5"><path d="M3.3 1V8.5M6.1 1V8.5M1 3.3H8.4M1 5.9H8.4" stroke="#cfe2f6" stroke-width="0.7"/><rect x="4.1" y="4" width="1.6" height="1.8" fill="#123"/></svg>
<div class="b" style="left:721.90px;top:136.90px;width:45.80px;height:12.90px;background:#fff;border:0.8px solid #e9e9e9;"></div>
<div class="a" style="left:725.10px;top:140.15px;font-size:7.5px;letter-spacing:0.013px;color:#111;">03.05.16</div>
<div class="b" style="left:757.90px;top:138.70px;width:9.40px;height:9.50px;background:#6ea3dc;border:0.9px solid #4a4a4a;border-radius:1px;box-shadow:0 0.8px 0 #bbb;"></div>
<svg style="left:757.90px;top:138.70px" width="9.4" height="9.5" viewBox="0 0 9.4 9.5"><path d="M3.3 1V8.5M6.1 1V8.5M1 3.3H8.4M1 5.9H8.4" stroke="#cfe2f6" stroke-width="0.7"/><rect x="4.1" y="4" width="1.6" height="1.8" fill="#123"/></svg>
<svg style="left:0.00px;top:0.00px" width="1280" height="703" viewBox="0 0 1280 703"><path d="M432.20 283.60A105.0 105.0 0 1 0 227.82 317.49L276.66 300.83A53.4 53.4 0 1 1 380.60 283.60Z" fill="#5b9422" stroke="#fff" stroke-width="1.25" stroke-linejoin="round"/><path d="M227.82 317.49A105.0 105.0 0 0 0 432.20 283.60L380.60 283.60A53.4 53.4 0 0 1 276.66 300.83Z" fill="#00a7b5" stroke="#fff" stroke-width="1.25" stroke-linejoin="round"/></svg>
<svg style="left:0.00px;top:0.00px" width="1280" height="703" viewBox="0 0 1280 703"><path d="M807.30 283.60A105.3 105.3 0 0 0 649.48 192.33L675.37 237.32A53.4 53.4 0 0 1 755.40 283.60Z" fill="#5b9422" stroke="#fff" stroke-width="1.25" stroke-linejoin="round"/><path d="M649.48 192.33A105.3 105.3 0 0 0 596.94 290.74L648.72 287.22A53.4 53.4 0 0 1 675.37 237.32Z" fill="#00a7b5" stroke="#fff" stroke-width="1.25" stroke-linejoin="round"/><path d="M596.94 290.74A105.3 105.3 0 0 0 636.06 365.70L668.56 325.23A53.4 53.4 0 0 1 648.72 287.22Z" fill="#ff5500" stroke="#fff" stroke-width="1.25" stroke-linejoin="round"/><path d="M636.06 365.70A105.3 105.3 0 0 0 701.27 388.90L701.63 337.00A53.4 53.4 0 0 1 668.56 325.23Z" fill="#9dcbec" stroke="#fff" stroke-width="1.25" stroke-linejoin="round"/><path d="M701.27 388.90A105.3 105.3 0 0 0 756.23 373.86L729.50 329.37A53.4 53.4 0 0 1 701.63 337.00Z" fill="#dcc55a" stroke="#fff" stroke-width="1.25" stroke-linejoin="round"/><path d="M756.23 373.86A105.3 105.3 0 0 0 784.43 349.13L743.80 316.83A53.4 53.4 0 0 1 729.50 329.37Z" fill="#ff5555" stroke="#fff" stroke-width="1.25" stroke-linejoin="round"/><path d="M784.43 349.13A105.3 105.3 0 0 0 801.56 317.90L752.49 300.99A53.4 53.4 0 0 1 743.80 316.83Z" fill="#c9c9c9" stroke="#fff" stroke-width="1.25" stroke-linejoin="round"/><path d="M801.56 317.90A105.3 105.3 0 0 0 807.30 283.60L755.40 283.60A53.4 53.4 0 0 1 752.49 300.99Z" fill="#ffcc00" stroke="#fff" stroke-width="1.25" stroke-linejoin="round"/></svg>
<div class="a" style="left:285.03px;top:276.56px;font-size:16px;letter-spacing:-0.139px;color:#444;">26.802,36 €</div>
<div class="a" style="left:659.73px;top:276.56px;font-size:16px;letter-spacing:-0.139px;color:#444;">18.247,41 €</div>
<div class="b" style="left:156.90px;top:424.00px;width:339.70px;height:11.70px;background:#eeeeee;border-bottom:1.1px solid #a9a9a9;"></div>
<div class="b" style="left:295.40px;top:424.30px;width:1.00px;height:10.40px;background:#adadad;"></div>
<div class="b" style="left:296.40px;top:424.30px;width:0.80px;height:10.40px;background:#fafafa;"></div>
<div class="b" style="left:363.40px;top:424.30px;width:1.00px;height:10.40px;background:#adadad;"></div>
<div class="b" style="left:364.40px;top:424.30px;width:0.80px;height:10.40px;background:#fafafa;"></div>
<div class="b" style="left:428.50px;top:424.30px;width:1.00px;height:10.40px;background:#adadad;"></div>
<div class="b" style="left:429.50px;top:424.30px;width:0.80px;height:10.40px;background:#fafafa;"></div>
<div class="a" style="left:159.80px;top:426.74px;font-size:7.4px;letter-spacing:-0.186px;color:#222;">Kategorie</div>
<div class="a" style="left:308.37px;top:426.74px;font-size:7.4px;letter-spacing:-0.133px;color:#222;">Gesamtbetrag €</div>
<div class="a" style="left:396.23px;top:426.74px;font-size:7.4px;letter-spacing:0.031px;color:#222;">%-Anteil</div>
<div class="a" style="left:453.94px;top:426.74px;font-size:7.4px;letter-spacing:-0.063px;color:#222;">pro Monat €</div>
<div class="b" style="left:156.90px;top:447.30px;width:339.70px;height:0.80px;background:#e4e4e4;"></div>
<div class="b" style="left:158.10px;top:437.00px;width:18.90px;height:9.40px;background:#5b9422;"></div>
<div class="a lnk" style="left:178.10px;top:439.04px;font-size:7.4px;letter-spacing:-0.200px;">Gehalt</div>
<div class="a" style="left:329.48px;top:439.04px;font-size:7.4px;letter-spacing:0.000px;color:#222;">14.802,36</div>
<div class="a" style="left:408.18px;top:439.04px;font-size:7.4px;letter-spacing:0.000px;color:#222;">55,23</div>
<div class="a" style="left:465.79px;top:439.04px;font-size:7.4px;letter-spacing:0.000px;color:#222;">1.233,53</div>
<div class="b" style="left:156.90px;top:458.60px;width:339.70px;height:0.80px;background:#e4e4e4;"></div>
<div class="b" style="left:158.10px;top:448.30px;width:18.90px;height:9.40px;background:#00a7b5;"></div>
<div class="a lnk" style="left:178.10px;top:450.34px;font-size:7.4px;letter-spacing:-0.109px;">Gehalt Partner</div>
<div class="a" style="left:329.48px;top:450.34px;font-size:7.4px;letter-spacing:0.000px;color:#222;">12.000,00</div>
<div class="a" style="left:408.18px;top:450.34px;font-size:7.4px;letter-spacing:0.000px;color:#222;">44,77</div>
<div class="a" style="left:465.79px;top:450.34px;font-size:7.4px;letter-spacing:0.000px;color:#222;">1.000,00</div>
<div class="b" style="left:156.90px;top:458.70px;width:339.70px;height:11.50px;background:#ededed;"></div>
<div class="a" style="left:158.50px;top:461.73px;font-size:8px;letter-spacing:-0.100px;font-weight:bold;color:#111;">Summe</div>
<div class="a" style="left:326.81px;top:461.73px;font-size:8px;letter-spacing:0.000px;font-weight:bold;color:#111;">26.802,36</div>
<div class="a" style="left:395.12px;top:461.73px;font-size:8px;letter-spacing:0.000px;font-weight:bold;color:#111;">100,00%</div>
<div class="a" style="left:463.46px;top:461.73px;font-size:8px;letter-spacing:0.000px;font-weight:bold;color:#111;">2.233,53</div>
<div class="b" style="left:531.90px;top:424.00px;width:339.70px;height:11.70px;background:#eeeeee;border-bottom:1.1px solid #a9a9a9;"></div>
<div class="b" style="left:672.30px;top:424.30px;width:1.00px;height:10.40px;background:#adadad;"></div>
<div class="b" style="left:673.30px;top:424.30px;width:0.80px;height:10.40px;background:#fafafa;"></div>
<div class="b" style="left:739.30px;top:424.30px;width:1.00px;height:10.40px;background:#adadad;"></div>
<div class="b" style="left:740.30px;top:424.30px;width:0.80px;height:10.40px;background:#fafafa;"></div>
<div class="b" style="left:805.10px;top:424.30px;width:1.00px;height:10.40px;background:#adadad;"></div>
<div class="b" style="left:806.10px;top:424.30px;width:0.80px;height:10.40px;background:#fafafa;"></div>
<div class="a" style="left:534.80px;top:426.74px;font-size:7.4px;letter-spacing:-0.186px;color:#222;">Kategorie</div>
<div class="a" style="left:684.27px;top:426.74px;font-size:7.4px;letter-spacing:-0.133px;color:#222;">Gesamtbetrag €</div>
<div class="a" style="left:772.13px;top:426.74px;font-size:7.4px;letter-spacing:0.031px;color:#222;">%-Anteil</div>
<div class="a" style="left:829.84px;top:426.74px;font-size:7.4px;letter-spacing:-0.063px;color:#222;">pro Monat €</div>
<div class="b" style="left:531.90px;top:447.30px;width:339.70px;height:0.80px;background:#e4e4e4;"></div>
<div class="b" style="left:533.10px;top:437.00px;width:18.90px;height:9.40px;background:#5b9422;"></div>
<div class="a lnk" style="left:553.10px;top:439.04px;font-size:7.4px;letter-spacing:-0.033px;">Hypothek</div>
<div class="a" style="left:709.49px;top:439.04px;font-size:7.4px;letter-spacing:0.000px;color:#222;">6.078,12</div>
<div class="a" style="left:784.08px;top:439.04px;font-size:7.4px;letter-spacing:0.000px;color:#222;">33,31</div>
<div class="a" style="left:847.87px;top:439.04px;font-size:7.4px;letter-spacing:0.000px;color:#222;">506,51</div>
<div class="b" style="left:531.90px;top:458.60px;width:339.70px;height:0.80px;background:#e4e4e4;"></div>
<div class="b" style="left:533.10px;top:448.30px;width:18.90px;height:9.40px;background:#00a7b5;"></div>
<div class="a lnk" style="left:553.10px;top:450.34px;font-size:7.4px;letter-spacing:-0.140px;">Erbpacht</div>
<div class="a" style="left:709.49px;top:450.34px;font-size:7.4px;letter-spacing:0.000px;color:#222;">3.242,16</div>
<div class="a" style="left:784.08px;top:450.34px;font-size:7.4px;letter-spacing:0.000px;color:#222;">17,77</div>
<div class="a" style="left:847.87px;top:450.34px;font-size:7.4px;letter-spacing:0.000px;color:#222;">270,18</div>
<div class="b" style="left:531.90px;top:469.90px;width:339.70px;height:0.80px;background:#e4e4e4;"></div>
<div class="b" style="left:533.10px;top:459.60px;width:18.90px;height:9.40px;background:#ff5500;"></div>
<div class="a lnk" style="left:553.10px;top:461.64px;font-size:7.4px;letter-spacing:-0.147px;">Lebensversicherung</div>
<div class="a" style="left:709.49px;top:461.64px;font-size:7.4px;letter-spacing:0.000px;color:#222;">2.400,00</div>
<div class="a" style="left:784.08px;top:461.64px;font-size:7.4px;letter-spacing:0.000px;color:#222;">13,15</div>
<div class="a" style="left:847.87px;top:461.64px;font-size:7.4px;letter-spacing:0.000px;color:#222;">200,00</div>
<div class="b" style="left:531.90px;top:481.20px;width:339.70px;height:0.80px;background:#e4e4e4;"></div>
<div class="b" style="left:533.10px;top:470.90px;width:18.90px;height:9.40px;background:#9dcbec;"></div>
<div class="a lnk" style="left:553.10px;top:472.94px;font-size:7.4px;letter-spacing:-0.138px;">Krankenversicherung</div>
<div class="a" style="left:709.49px;top:472.94px;font-size:7.4px;letter-spacing:0.000px;color:#222;">1.945,32</div>
<div class="a" style="left:784.08px;top:472.94px;font-size:7.4px;letter-spacing:0.000px;color:#222;">10,66</div>
<div class="a" style="left:848.42px;top:472.94px;font-size:7.4px;letter-spacing:0.000px;color:#222;">162,11</div>
<div class="b" style="left:531.90px;top:492.50px;width:339.70px;height:0.80px;background:#e4e4e4;"></div>
<div class="b" style="left:533.10px;top:482.20px;width:18.90px;height:9.40px;background:#dcc55a;"></div>
<div class="a lnk" style="left:553.10px;top:484.24px;font-size:7.4px;letter-spacing:-0.138px;">Lebensmittel</div>
<div class="a" style="left:709.49px;top:484.24px;font-size:7.4px;letter-spacing:0.000px;color:#222;">1.591,20</div>
<div class="a" style="left:788.20px;top:484.24px;font-size:7.4px;letter-spacing:0.000px;color:#222;">8,72</div>
<div class="a" style="left:847.87px;top:484.24px;font-size:7.4px;letter-spacing:0.000px;color:#222;">132,60</div>
<div class="b" style="left:531.90px;top:503.80px;width:339.70px;height:0.80px;background:#e4e4e4;"></div>
<div class="b" style="left:533.10px;top:493.50px;width:18.90px;height:9.40px;background:#ff5555;"></div>
<div class="a lnk" style="left:553.10px;top:495.54px;font-size:7.4px;letter-spacing:-0.107px;">Freizeit</div>
<div class="a" style="left:709.49px;top:495.54px;font-size:7.4px;letter-spacing:0.000px;color:#222;">1.040,76</div>
<div class="a" style="left:788.20px;top:495.54px;font-size:7.4px;letter-spacing:0.000px;color:#222;">5,70</div>
<div class="a" style="left:851.98px;top:495.54px;font-size:7.4px;letter-spacing:0.000px;color:#222;">86,73</div>
<div class="b" style="left:531.90px;top:515.10px;width:339.70px;height:0.80px;background:#e4e4e4;"></div>
<div class="b" style="left:533.10px;top:504.80px;width:18.90px;height:9.40px;background:#c9c9c9;"></div>
<div class="a lnk" style="left:553.10px;top:506.84px;font-size:7.4px;letter-spacing:-0.153px;">Fahrzeuge</div>
<div class="a" style="left:715.67px;top:506.84px;font-size:7.4px;letter-spacing:0.000px;color:#222;">986,76</div>
<div class="a" style="left:788.20px;top:506.84px;font-size:7.4px;letter-spacing:0.000px;color:#222;">5,41</div>
<div class="a" style="left:851.98px;top:506.84px;font-size:7.4px;letter-spacing:0.000px;color:#222;">82,23</div>
<div class="b" style="left:531.90px;top:526.40px;width:339.70px;height:0.80px;background:#e4e4e4;"></div>
<div class="b" style="left:533.10px;top:516.10px;width:18.90px;height:9.40px;background:#ffcc00;"></div>
<div class="a lnk" style="left:553.10px;top:518.14px;font-size:7.4px;letter-spacing:-0.150px;">Gesundheitskosten</div>
<div class="a" style="left:715.67px;top:518.14px;font-size:7.4px;letter-spacing:0.000px;color:#222;">963,09</div>
<div class="a" style="left:788.20px;top:518.14px;font-size:7.4px;letter-spacing:0.000px;color:#222;">5,28</div>
<div class="a" style="left:851.98px;top:518.14px;font-size:7.4px;letter-spacing:0.000px;color:#222;">80,25</div>
<div class="b" style="left:531.90px;top:526.50px;width:339.70px;height:11.50px;background:#ededed;"></div>
<div class="a" style="left:533.50px;top:529.53px;font-size:8px;letter-spacing:-0.100px;font-weight:bold;color:#111;">Summe</div>
<div class="a" style="left:702.71px;top:529.53px;font-size:8px;letter-spacing:0.000px;font-weight:bold;color:#111;">18.247,41</div>
<div class="a" style="left:771.02px;top:529.53px;font-size:8px;letter-spacing:0.000px;font-weight:bold;color:#111;">100,00%</div>
<div class="a" style="left:839.36px;top:529.53px;font-size:8px;letter-spacing:0.000px;font-weight:bold;color:#111;">1.520,61</div>
<div class="b" style="left:906.20px;top:130.40px;width:343.40px;height:12.60px;background:#f0f0f0;border-bottom:1.3px solid #ababab;"></div>
<div class="b" style="left:1092.60px;top:130.90px;width:0.90px;height:10.40px;background:#b5b5b5;"></div>
<div class="b" style="left:1093.50px;top:130.90px;width:0.80px;height:10.40px;background:#fafafa;"></div>
<div class="a" style="left:908.80px;top:133.34px;font-size:7.4px;letter-spacing:-0.228px;color:#222;">Konto</div>
<svg style="left:930.00px;top:134.00px" width="5.4" height="5" viewBox="0 0 5.4 5"><path d="M2.7 0.8L4.8 4.4H0.6Z" fill="none" stroke="#222" stroke-width="1.1"/></svg>
<div class="a" style="left:1206.48px;top:133.34px;font-size:7.4px;letter-spacing:-0.119px;color:#222;">Stand heute</div>
<div class="b" style="left:906.20px;top:143.00px;width:343.40px;height:10.82px;background:#ececec;"></div>
<svg style="left:908.10px;top:144.60px" width="7" height="7" viewBox="0 0 7 7"><rect x="0.5" y="0.5" width="5.8" height="5.8" fill="#fff" stroke="#222" stroke-width="1"/><path d="M1.8 3.4H5" stroke="#111" stroke-width="1.1"/></svg>
<div class="a" style="left:917.50px;top:144.33px;font-size:8px;letter-spacing:-0.441px;font-weight:bold;color:#111;">Bank</div>
<div class="a" style="left:1200.09px;top:144.33px;font-size:8px;letter-spacing:0.000px;font-weight:bold;color:#111;">227.902,34 €</div>
<div class="b" style="left:906.20px;top:164.93px;width:343.40px;height:0.80px;background:#e6e6e6;"></div>
<div class="a lnk" style="left:917.50px;top:156.15px;font-size:7.4px;letter-spacing:-0.150px;">Fondsparkonto-Bank</div>
<div class="a" style="left:1211.82px;top:156.15px;font-size:7.4px;letter-spacing:0.000px;color:#1c1c1c;">2.000,00 €</div>
<div class="b" style="left:906.20px;top:176.25px;width:343.40px;height:0.80px;background:#e6e6e6;"></div>
<div class="a lnk" style="left:917.50px;top:167.47px;font-size:7.4px;letter-spacing:-0.265px;">+ING-DiBa</div>
<div class="a" style="left:1207.71px;top:167.47px;font-size:7.4px;letter-spacing:0.000px;color:#1c1c1c;">53.144,26 €</div>
<div class="b" style="left:906.20px;top:187.56px;width:343.40px;height:0.80px;background:#e6e6e6;"></div>
<div class="a lnk" style="left:917.50px;top:178.78px;font-size:7.4px;letter-spacing:-0.228px;">Postbank Hamburg</div>
<div class="a" style="left:1226.23px;top:178.78px;font-size:7.4px;letter-spacing:0.000px;color:#1c1c1c;">1,00 €</div>
<div class="b" style="left:906.20px;top:198.88px;width:343.40px;height:0.80px;background:#e6e6e6;"></div>
<div class="a lnk" style="left:917.50px;top:190.10px;font-size:7.4px;letter-spacing:-0.202px;">Volksbank Freiburg</div>
<div class="a" style="left:1203.59px;top:190.10px;font-size:7.4px;letter-spacing:0.000px;color:#1c1c1c;">157.829,54 €</div>
<div class="b" style="left:906.20px;top:210.20px;width:343.40px;height:0.80px;background:#e6e6e6;"></div>
<div class="a lnk" style="left:917.50px;top:201.42px;font-size:7.4px;letter-spacing:-0.095px;">Wertpapier-Depot-Bank</div>
<div class="a" style="left:1207.71px;top:201.42px;font-size:7.4px;letter-spacing:0.000px;color:#1c1c1c;">14.927,54 €</div>
<div class="b" style="left:906.20px;top:210.90px;width:343.40px;height:10.82px;background:#ececec;"></div>
<svg style="left:908.10px;top:212.50px" width="7" height="7" viewBox="0 0 7 7"><rect x="0.5" y="0.5" width="5.8" height="5.8" fill="#fff" stroke="#222" stroke-width="1"/><path d="M1.8 3.4H5" stroke="#111" stroke-width="1.1"/></svg>
<div class="a" style="left:917.50px;top:212.22px;font-size:8px;letter-spacing:-0.347px;font-weight:bold;color:#111;">Bar</div>
<div class="a" style="left:1204.54px;top:212.22px;font-size:8px;letter-spacing:0.000px;font-weight:bold;color:#111;">17.090,12 €</div>
<div class="b" style="left:906.20px;top:232.83px;width:343.40px;height:0.80px;background:#e6e6e6;"></div>
<div class="a lnk" style="left:917.50px;top:224.05px;font-size:7.4px;letter-spacing:-0.151px;">Bargeldkonto</div>
<div class="a" style="left:1207.71px;top:224.05px;font-size:7.4px;letter-spacing:0.000px;color:#1c1c1c;">17.090,12 €</div>
<div class="b" style="left:906.20px;top:233.53px;width:343.40px;height:10.82px;background:#ececec;"></div>
<svg style="left:908.10px;top:235.13px" width="7" height="7" viewBox="0 0 7 7"><rect x="0.5" y="0.5" width="5.8" height="5.8" fill="#fff" stroke="#222" stroke-width="1"/><path d="M1.8 3.4H5" stroke="#111" stroke-width="1.1"/></svg>
<div class="a" style="left:917.50px;top:234.86px;font-size:8px;letter-spacing:-0.079px;font-weight:bold;color:#111;">Darlehen</div>
<div class="a" style="left:1201.87px;top:234.86px;font-size:8px;letter-spacing:0.000px;font-weight:bold;color:#ff0000;">-94.427,36 €</div>
<div class="b" style="left:906.20px;top:255.46px;width:343.40px;height:0.80px;background:#e6e6e6;"></div>
<div class="a lnk" style="left:917.50px;top:246.68px;font-size:7.4px;letter-spacing:-0.019px;">Annuität</div>
<div class="a" style="left:1205.24px;top:246.68px;font-size:7.4px;letter-spacing:0.000px;color:#ff1c1c;">-95.746,96 €</div>
<div class="b" style="left:906.20px;top:266.78px;width:343.40px;height:0.80px;background:#e6e6e6;"></div>
<div class="a lnk" style="left:917.50px;top:258.00px;font-size:7.4px;letter-spacing:-0.102px;">Opel Astra Kredit</div>
<div class="a" style="left:1211.82px;top:258.00px;font-size:7.4px;letter-spacing:0.000px;color:#1c1c1c;">1.319,60 €</div>
<div class="b" style="left:906.20px;top:267.48px;width:343.40px;height:10.82px;background:#ececec;"></div>
<svg style="left:908.10px;top:269.08px" width="7" height="7" viewBox="0 0 7 7"><rect x="0.5" y="0.5" width="5.8" height="5.8" fill="#fff" stroke="#222" stroke-width="1"/><path d="M1.8 3.4H5" stroke="#111" stroke-width="1.1"/></svg>
<div class="a" style="left:917.50px;top:268.80px;font-size:8px;letter-spacing:0.161px;font-weight:bold;color:#111;">Inventarkonten</div>
<div class="a" style="left:1204.54px;top:268.80px;font-size:8px;letter-spacing:0.000px;font-weight:bold;color:#111;">17.032,00 €</div>
<div class="b" style="left:906.20px;top:289.41px;width:343.40px;height:0.80px;background:#e6e6e6;"></div>
<div class="a lnk" style="left:917.50px;top:280.63px;font-size:7.4px;letter-spacing:-0.067px;">Inventar Haus Freiburg</div>
<div class="a" style="left:1207.71px;top:280.63px;font-size:7.4px;letter-spacing:0.000px;color:#1c1c1c;">17.032,00 €</div>
<div class="b" style="left:906.20px;top:290.11px;width:343.40px;height:10.82px;background:#ececec;"></div>
<svg style="left:908.10px;top:291.71px" width="7" height="7" viewBox="0 0 7 7"><rect x="0.5" y="0.5" width="5.8" height="5.8" fill="#fff" stroke="#222" stroke-width="1"/><path d="M1.8 3.4H5" stroke="#111" stroke-width="1.1"/></svg>
<div class="a" style="left:917.50px;top:291.44px;font-size:8px;letter-spacing:0.069px;font-weight:bold;color:#111;">Kreditkarte</div>
<div class="a" style="left:1213.00px;top:291.44px;font-size:8px;letter-spacing:0.000px;font-weight:bold;color:#ff0000;">-136,70 €</div>
<div class="b" style="left:906.20px;top:312.04px;width:343.40px;height:0.80px;background:#e6e6e6;"></div>
<div class="a lnk" style="left:917.50px;top:303.26px;font-size:7.4px;letter-spacing:-0.241px;">VISA-Card</div>
<div class="a" style="left:1215.53px;top:303.26px;font-size:7.4px;letter-spacing:0.000px;color:#ff1c1c;">-136,70 €</div>
<div class="b" style="left:906.20px;top:312.74px;width:343.40px;height:10.82px;background:#ececec;"></div>
<svg style="left:908.10px;top:314.34px" width="7" height="7" viewBox="0 0 7 7"><rect x="0.5" y="0.5" width="5.8" height="5.8" fill="#fff" stroke="#222" stroke-width="1"/><path d="M1.8 3.4H5" stroke="#111" stroke-width="1.1"/></svg>
<div class="a" style="left:917.50px;top:314.07px;font-size:8px;letter-spacing:0.066px;font-weight:bold;color:#111;">Mehrwertsteuerkonto</div>
<div class="a" style="left:1215.66px;top:314.07px;font-size:8px;letter-spacing:0.000px;font-weight:bold;color:#111;">138,03 €</div>
<div class="b" style="left:906.20px;top:334.67px;width:343.40px;height:0.80px;background:#e6e6e6;"></div>
<div class="a lnk" style="left:917.50px;top:325.89px;font-size:7.4px;letter-spacing:-0.043px;">Mehrwertsteuer</div>
<div class="a" style="left:1217.99px;top:325.89px;font-size:7.4px;letter-spacing:0.000px;color:#1c1c1c;">138,03 €</div>
<div class="b" style="left:906.20px;top:335.37px;width:343.40px;height:10.82px;background:#ececec;"></div>
<svg style="left:908.10px;top:336.97px" width="7" height="7" viewBox="0 0 7 7"><rect x="0.5" y="0.5" width="5.8" height="5.8" fill="#fff" stroke="#222" stroke-width="1"/><path d="M1.8 3.4H5" stroke="#111" stroke-width="1.1"/></svg>
<div class="a" style="left:917.50px;top:336.70px;font-size:8px;letter-spacing:-0.060px;font-weight:bold;color:#111;">Vermögen</div>
<div class="a" style="left:1204.54px;top:336.70px;font-size:8px;letter-spacing:0.000px;font-weight:bold;color:#111;">19.000,00 €</div>
<div class="b" style="left:906.20px;top:357.30px;width:343.40px;height:0.80px;background:#e6e6e6;"></div>
<div class="a lnk" style="left:917.50px;top:348.52px;font-size:7.4px;letter-spacing:-0.144px;">Opel Astra Vermögen</div>
<div class="a" style="left:1207.71px;top:348.52px;font-size:7.4px;letter-spacing:0.000px;color:#1c1c1c;">19.000,00 €</div>
<div class="b" style="left:906.20px;top:358.00px;width:343.40px;height:10.82px;background:#ececec;"></div>
<svg style="left:908.10px;top:359.60px" width="7" height="7" viewBox="0 0 7 7"><rect x="0.5" y="0.5" width="5.8" height="5.8" fill="#fff" stroke="#222" stroke-width="1"/><path d="M1.8 3.4H5" stroke="#111" stroke-width="1.1"/></svg>
<div class="a" style="left:917.50px;top:359.33px;font-size:8px;letter-spacing:-0.141px;font-weight:bold;color:#111;">Versicherung</div>
<div class="a" style="left:1208.99px;top:359.33px;font-size:8px;letter-spacing:0.000px;font-weight:bold;color:#111;">4.720,00 €</div>
<div class="b" style="left:906.20px;top:379.94px;width:343.40px;height:0.80px;background:#e6e6e6;"></div>
<div class="a lnk" style="left:917.50px;top:371.16px;font-size:7.4px;letter-spacing:-0.231px;">Assekuranz Leben</div>
<div class="a" style="left:1211.82px;top:371.16px;font-size:7.4px;letter-spacing:0.000px;color:#1c1c1c;">1.870,00 €</div>
<div class="b" style="left:906.20px;top:391.25px;width:343.40px;height:0.80px;background:#e6e6e6;"></div>
<div class="a lnk" style="left:917.50px;top:382.47px;font-size:7.4px;letter-spacing:-0.179px;">Assekuranz Rente</div>
<div class="a" style="left:1211.82px;top:382.47px;font-size:7.4px;letter-spacing:0.000px;color:#1c1c1c;">2.850,00 €</div>
<div class="b" style="left:906.20px;top:391.95px;width:343.40px;height:10.82px;background:#ececec;"></div>
<svg style="left:908.10px;top:393.55px" width="7" height="7" viewBox="0 0 7 7"><rect x="0.5" y="0.5" width="5.8" height="5.8" fill="#fff" stroke="#222" stroke-width="1"/><path d="M1.8 3.4H5" stroke="#111" stroke-width="1.1"/></svg>
<div class="a" style="left:917.50px;top:393.28px;font-size:8px;letter-spacing:0.056px;font-weight:bold;color:#111;">Wertpapier</div>
<div class="a" style="left:1204.54px;top:393.28px;font-size:8px;letter-spacing:0.000px;font-weight:bold;color:#111;">35.198,70 €</div>
<div class="b" style="left:906.20px;top:413.88px;width:343.40px;height:0.80px;background:#e6e6e6;"></div>
<div class="a lnk" style="left:917.50px;top:405.10px;font-size:7.4px;letter-spacing:-0.120px;">Fondsparkonto</div>
<div class="a" style="left:1211.82px;top:405.10px;font-size:7.4px;letter-spacing:0.000px;color:#1c1c1c;">9.136,14 €</div>
<div class="b" style="left:906.20px;top:425.20px;width:343.40px;height:0.80px;background:#e6e6e6;"></div>
<div class="a lnk" style="left:917.50px;top:416.42px;font-size:7.4px;letter-spacing:-0.042px;">Wertpapier-Depot</div>
<div class="a" style="left:1207.71px;top:416.42px;font-size:7.4px;letter-spacing:0.000px;color:#1c1c1c;">26.062,56 €</div>
<div class="b" style="left:906.20px;top:425.30px;width:343.40px;height:10.82px;background:#ececec;"></div>
<div class="a" style="left:907.40px;top:427.23px;font-size:8px;letter-spacing:-0.125px;font-weight:bold;color:#111;">Gesamt</div>
<div class="a" style="left:1200.09px;top:427.23px;font-size:8px;letter-spacing:0.000px;font-weight:bold;color:#111;">226.517,13 €</div>
</div>
</body></html>
